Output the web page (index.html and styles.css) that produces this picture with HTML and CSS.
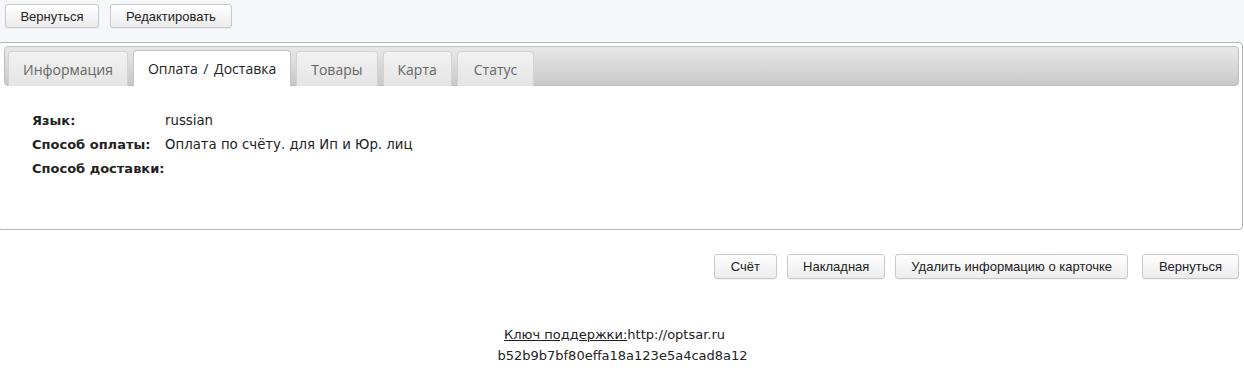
FILE: index.html
```html
<!DOCTYPE html>
<html lang="ru">
<head>
<meta charset="utf-8">
<title>Заказ</title>
<link rel="stylesheet" href="styles.css">
</head>
<body>
<div class="toolbar">
  <button class="btn btn-top">Вернуться</button>
  <button class="btn btn-top btn-edit">Редактировать</button>
</div>
<div class="panel">
  <div class="tabbar">
    <div class="tab">Информация</div>
    <div class="tab active">Оплата / Доставка</div>
    <div class="tab">Товары</div>
    <div class="tab">Карта</div>
    <div class="tab">Статус</div>
  </div>
  <div class="info">
    <div class="row"><span class="label">Язык:</span><span class="value">russian</span></div>
    <div class="row"><span class="label">Способ оплаты:</span><span class="value">Оплата по счёту. для Ип и Юр. лиц</span></div>
    <div class="row"><span class="label">Способ доставки:</span><span class="value"></span></div>
  </div>
</div>
<div class="actions">
  <button class="btn btn-invoice">Счёт</button>
  <button class="btn">Накладная</button>
  <button class="btn">Удалить информацию о карточке</button>
  <button class="btn btn-back">Вернуться</button>
</div>
<div class="footer">
  <div class="footer-line1"><span class="key">Ключ поддержки:</span>http://optsar.ru</div>
  <div>b52b9b7bf80effa18a123e5a4cad8a12</div>
</div>
</body>
</html>
```
FILE: styles.css
```css
html, body {
  margin: 0;
  padding: 0;
  background: #ffffff;
}
body {
  font-family: "DejaVu Sans", Verdana, sans-serif;
  font-size: 13.3px;
  color: #222;
  width: 1244px;
  overflow: hidden;
}
.toolbar {
  background: #f6f7fb;
  height: 42px;
  box-sizing: border-box;
  padding: 4px 5px 0;
  display: flex;
  align-items: flex-start;
  gap: 11px;
}
.btn {
  font-family: "Liberation Sans", Arial, sans-serif;
  font-size: 13px;
  color: #222;
  height: 25px;
  padding: 0 15px;
  margin: 0;
  border: 1px solid #c9c9c9;
  border-radius: 3px;
  background: linear-gradient(#ffffff, #ececec);
  box-shadow: 0 1px 1px rgba(0,0,0,0.05);
  cursor: pointer;
  box-sizing: border-box;
}
.btn-top {
  height: 24px;
  width: 94px;
  padding: 0;
}
.btn-edit {
  width: 122px;
}
.panel {
  margin-left: -2px;
  width: 1245px;
  box-sizing: border-box;
  height: 188px;
  border: 1px solid #b5b5b5;
  border-radius: 4px;
  background: #fff;
  padding: 3px 3px 0 5px;
}
.tabbar {
  height: 40px;
  box-sizing: border-box;
  border: 1px solid #bdbdbd;
  border-radius: 4px;
  background: linear-gradient(#e8e8e8, #c9c9c9);
  display: flex;
  align-items: flex-end;
  gap: 5px;
  padding: 0 3px;
}
.tab {
  font-family: "Open Sans", "Noto Sans", sans-serif;
  font-size: 14px;
  color: #666;
  height: 35px;
  box-sizing: border-box;
  padding: 0 14px;
  display: flex;
  align-items: center;
  border: 1px solid #d3d3d3;
  border-bottom: none;
  border-radius: 4px 4px 0 0;
  background: linear-gradient(#f2f2f2, #e4e4e4);
  margin-bottom: -1px;
}
.tab:last-child {
  padding: 0 16px;
}
.tab.active {
  background: #fff;
  color: #222;
  border-color: #c4c4c4;
  height: 36px;
  word-spacing: 2px;
}
.info {
  padding: 27px 0 0 28px;
  display: flex;
  flex-direction: column;
  gap: 8px;
}
.row {
  display: flex;
  height: 16px;
  line-height: 16px;
}
.label {
  font-weight: bold;
  width: 133px;
  font-size: 13px;
}
.actions {
  display: flex;
  justify-content: flex-end;
  gap: 10px;
  padding: 24px 5px 0 0;
}
.btn-invoice {
  padding: 0 16px;
}
.btn-back {
  margin-left: 4px;
  width: 97px;
  padding: 0;
}
.footer {
  text-align: center;
  font-size: 13px;
  line-height: 21px;
  padding-top: 45px;
  padding-left: 1px;
}
.footer-line1 {
  padding-right: 16px;
}
.key {
  text-decoration: underline;
}
```
